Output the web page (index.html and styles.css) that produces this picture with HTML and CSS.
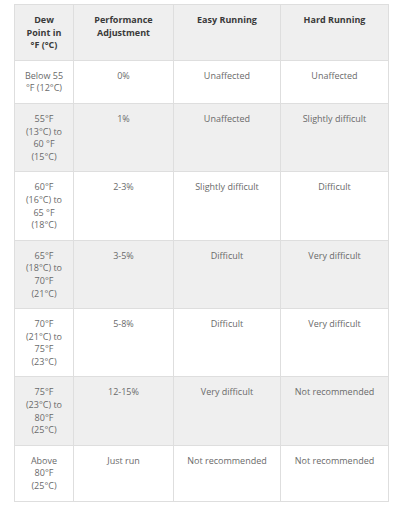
FILE: index.html
```html
<!DOCTYPE html>
<html lang="en">
<head>
<meta charset="utf-8">
<link rel="stylesheet" href="styles.css">
</head>
<body>
<table class="dew">
  <colgroup>
    <col class="c1"><col class="c2"><col class="c3"><col class="c4">
  </colgroup>
  <thead>
    <tr>
      <th>Dew<br>Point in<br>°F (°C)</th>
      <th>Performance<br>Adjustment</th>
      <th>Easy Running</th>
      <th>Hard Running</th>
    </tr>
  </thead>
  <tbody>
    <tr>
      <td>Below 55<br>°F (12°C)</td>
      <td>0%</td>
      <td>Unaffected</td>
      <td>Unaffected</td>
    </tr>
    <tr class="alt">
      <td>55°F<br>(13°C) to<br>60 °F<br>(15°C)</td>
      <td>1%</td>
      <td>Unaffected</td>
      <td>Slightly difficult</td>
    </tr>
    <tr>
      <td>60°F<br>(16°C) to<br>65 °F<br>(18°C)</td>
      <td>2-3%</td>
      <td>Slightly difficult</td>
      <td>Difficult</td>
    </tr>
    <tr class="alt">
      <td>65°F<br>(18°C) to<br>70°F<br>(21°C)</td>
      <td>3-5%</td>
      <td>Difficult</td>
      <td>Very difficult</td>
    </tr>
    <tr>
      <td>70°F<br>(21°C) to<br>75°F<br>(23°C)</td>
      <td>5-8%</td>
      <td>Difficult</td>
      <td>Very difficult</td>
    </tr>
    <tr class="alt">
      <td>75°F<br>(23°C) to<br>80°F<br>(25°C)</td>
      <td>12-15%</td>
      <td>Very difficult</td>
      <td>Not recommended</td>
    </tr>
    <tr>
      <td>Above<br>80°F<br>(25°C)</td>
      <td>Just run</td>
      <td>Not recommended</td>
      <td>Not recommended</td>
    </tr>
  </tbody>
</table>
</body>
</html>
```
FILE: styles.css
```css
html, body {
  margin: 0;
  background: #ffffff;
}
body {
  padding: 4px 14px 0 14px;
  font-family: "Open Sans", "DejaVu Sans", sans-serif;
}
.dew {
  width: 374px;
  border-collapse: collapse;
  table-layout: fixed;
  font-size: 9px;
  line-height: 12.6px;
}
.c1 { width: 59px; }
.c2 { width: 100px; }
.c3 { width: 107px; }
.c4 { width: 108px; }
.dew th,
.dew td {
  border: 1px solid #dedede;
  padding: 9px 4px 8px 4px;
  text-align: center;
  vertical-align: top;
  white-space: nowrap;
}
.dew th {
  background: #efefef;
  color: #3a3a3a;
  font-weight: 700;
}
.dew td {
  color: #6a6a6a;
  font-weight: 400;
}
.dew tr.alt td {
  background: #efefef;
}
```
